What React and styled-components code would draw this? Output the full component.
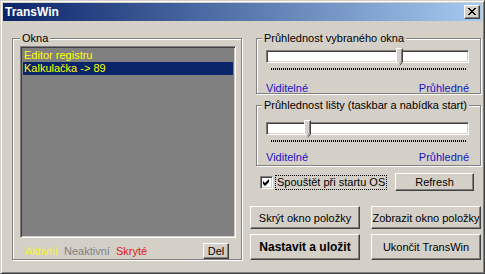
import React from 'react'
import styled, { createGlobalStyle } from 'styled-components'

const GlobalStyle = createGlobalStyle`
  html, body {
    margin: 0;
    padding: 0;
    background: #D4D0C8;
  }
  body {
    font-family: 'Liberation Sans', Arial, sans-serif;
    font-size: 11px;
    color: #000;
  }
`;

const Window = styled.div`
  width: 485px;
  height: 274px;
  box-sizing: border-box;
  background: #D4D0C8;
  border: 1px solid;
  border-color: #D4D0C8 #404040 #404040 #D4D0C8;
  box-shadow: inset 1px 1px 0 #fff, inset -1px -1px 0 #808080;
  padding: 2px;
  display: flex;
  flex-direction: column;
`;

const TitleBar = styled.div`
  height: 18px;
  flex: none;
  display: flex;
  align-items: center;
  justify-content: space-between;
  padding: 0 2px 0 2px;
  background: linear-gradient(to right, #0A246A, #A6CAF0);
`;

const TitleText = styled.span`
  color: #fff;
  font-weight: bold;
  font-size: 12px;
  font-family: 'Liberation Sans', Arial, sans-serif;
`;

const Raised = styled.div`
  box-sizing: border-box;
  background: #D4D0C8;
  border: 1px solid;
  border-color: #fff #404040 #404040 #fff;
  box-shadow: inset -1px -1px 0 #808080;
`;

const CloseBtn = styled(Raised)`
  width: 16px;
  height: 14px;
  display: flex;
  align-items: center;
  justify-content: center;
  padding-bottom: 1px;
`;

const Main = styled.div`
  flex: 1;
  display: flex;
  padding: 17px 0 0 9px;
  gap: 8px;
`;

const Group = styled.div`
  position: relative;
  box-sizing: border-box;
  border: 1px solid #808080;
  box-shadow: inset 1px 1px 0 #fff, 1px 1px 0 #fff;
  width: ${p => p.$w}px;
  height: ${p => p.$h}px;
  margin-left: ${p => p.$ml || 0}px;
  margin-top: ${p => p.$mt || 0}px;
  display: flex;
  flex-direction: column;
  flex: none;
`;

const GroupLabel = styled.span`
  position: absolute;
  top: -7px;
  left: ${p => p.$l || 5}px;
  padding: 0 2px;
  line-height: 13px;
  background: #D4D0C8;
  white-space: nowrap;
`;

const Sunken = styled.div`
  box-sizing: border-box;
  border: 1px solid;
  border-color: #808080 #fff #fff #808080;
  box-shadow: inset 1px 1px 0 #404040, inset -1px -1px 0 #D4D0C8;
`;

const ListBox = styled(Sunken)`
  margin: 7px 0 0 7px;
  width: 216px;
  height: 192px;
  background: #808080;
  padding: 2px;
`;

const ListItem = styled.div`
  height: 13px;
  line-height: 13px;
  padding-left: 1px;
  color: #FFFF00;
  background: ${p => (p.$sel ? '#0A246A' : 'transparent')};
  white-space: nowrap;
`;

const LegendRow = styled.div`
  display: flex;
  align-items: center;
  margin-top: 5px;
  padding: 0 12px 0 12px;
  gap: 6px;
`;

const LegendText = styled.span`
  color: ${p => p.$c};
  line-height: 13px;
`;

const Button = styled(Raised)`
  width: ${p => p.$w}px;
  height: ${p => p.$h}px;
  display: flex;
  align-items: center;
  justify-content: center;
  font-weight: ${p => (p.$bold ? 'bold' : 'normal')};
  font-size: ${p => (p.$bold ? '12px' : '11px')};
  white-space: nowrap;
  flex: none;
`;

const Spacer = styled.div`
  flex: 1;
`;

const RightCol = styled.div`
  width: 232px;
  display: flex;
  flex-direction: column;
`;

const SliderWrap = styled.div`
  position: relative;
  margin: ${p => p.$mt}px 0 0 9px;
  width: 203px;
`;

const Track = styled(Sunken)`
  height: 13px;
  background: #fff;
`;

const Thumb = styled.svg`
  position: absolute;
  top: -2px;
`;

const Ticks = styled.div`
  margin: 5px 3px 0 5px;
  height: 2px;
  background: repeating-linear-gradient(to right, #000 0 1px, transparent 1px 2px);
`;

const ScaleLabels = styled.div`
  display: flex;
  justify-content: space-between;
  margin: ${p => p.$mt}px 0 0 0;
  color: #1414C4;
  line-height: 13px;
`;

const CheckRow = styled.div`
  display: flex;
  align-items: center;
  margin: 7px 0 0 10px;
  height: 18px;
`;

const CheckBox = styled(Sunken)`
  width: 13px;
  height: 13px;
  background: #fff;
  display: flex;
  align-items: center;
  justify-content: center;
  flex: none;
`;

const CheckLabel = styled.span`
  margin-left: 2px;
  padding: 0 1px;
  border: 1px dotted #000;
  line-height: 13px;
  white-space: nowrap;
`;

const ButtonRow = styled.div`
  display: flex;
  gap: 11px;
  margin-top: ${p => p.$mt}px;
`;

function Slider({ value, top }) {
  const left = Math.round((value / 100) * 193) + 1
  return (
    <SliderWrap $mt={top}>
      <Track />
      <Thumb width="8" height="18" viewBox="0 0 8 18" style={{ left }}>
        <path d="M0.5 0.5 H6.5 V14 L3.5 17 L0.5 14 Z" fill="#D4D0C8" />
        <path d="M0.5 14 V0.5 H6.5" stroke="#fff" fill="none" />
        <path d="M6.5 0.5 V14.2 L3.5 17.3" stroke="#404040" fill="none" />
        <path d="M5.5 1.5 V13.8 L3.5 15.8" stroke="#808080" fill="none" />
        <path d="M0.5 14 L3 16.5" stroke="#fff" fill="none" />
      </Thumb>
      <Ticks />
    </SliderWrap>
  )
}

export default function App() {
  return (
    <>
      <GlobalStyle />
      <Window>
        <TitleBar>
          <TitleText>TransWin</TitleText>
          <CloseBtn>
            <svg width="8" height="7" viewBox="0 0 8 7">
              <path d="M0 0 L7 7 M1 0 L8 7 M7 0 L0 7 M8 0 L1 7" stroke="#000" strokeWidth="1" />
            </svg>
          </CloseBtn>
        </TitleBar>
        <Main>
          <Group $w={230} $h={222}>
            <GroupLabel $l={7}>Okna</GroupLabel>
            <ListBox>
              <ListItem>Editor registru</ListItem>
              <ListItem $sel>Kalkulačka -&gt; 89</ListItem>
            </ListBox>
            <LegendRow>
              <LegendText $c="#F4F428">Aktivní</LegendText>
              <LegendText $c="#808080">Neaktivní</LegendText>
              <LegendText $c="#E01818">Skryté</LegendText>
              <Spacer />
              <Button $w={26} $h={16}>Del</Button>
            </LegendRow>
          </Group>
          <RightCol>
            <Group $w={225} $h={56} $ml={6}>
              <GroupLabel>Průhlednost vybraného okna</GroupLabel>
              <Slider value={67} top={11} />
              <SliderWrap $mt={0} as="div">
                <ScaleLabels $mt={12}>
                  <span>Viditelné</span>
                  <span>Průhledné</span>
                </ScaleLabels>
              </SliderWrap>
            </Group>
            <Group $w={225} $h={61} $ml={6} $mt={11}>
              <GroupLabel>Průhlednost lišty (taskbar a nabídka start)</GroupLabel>
              <Slider value={19} top={16} />
              <SliderWrap $mt={0} as="div">
                <ScaleLabels $mt={9}>
                  <span>Viditelné</span>
                  <span>Průhledné</span>
                </ScaleLabels>
              </SliderWrap>
            </Group>
            <CheckRow>
              <CheckBox>
                <svg width="7" height="7" viewBox="0 0 7 7">
                  <path d="M0 2 L2 4 L6 0 V3 L2 7 L0 5 Z" fill="#000" />
                </svg>
              </CheckBox>
              <CheckLabel>Spouštět při startu OS</CheckLabel>
              <Spacer />
              <Button $w={79} $h={18} style={{ marginRight: 8 }}>Refresh</Button>
            </CheckRow>
            <ButtonRow $mt={15}>
              <Button $w={110} $h={23}>Skrýt okno položky</Button>
              <Button $w={110} $h={23}>Zobrazit okno položky</Button>
            </ButtonRow>
            <ButtonRow $mt={5}>
              <Button $w={110} $h={26} $bold>Nastavit a uložit</Button>
              <Button $w={110} $h={26}>Ukončit TransWin</Button>
            </ButtonRow>
          </RightCol>
        </Main>
      </Window>
    </>
  )
}
